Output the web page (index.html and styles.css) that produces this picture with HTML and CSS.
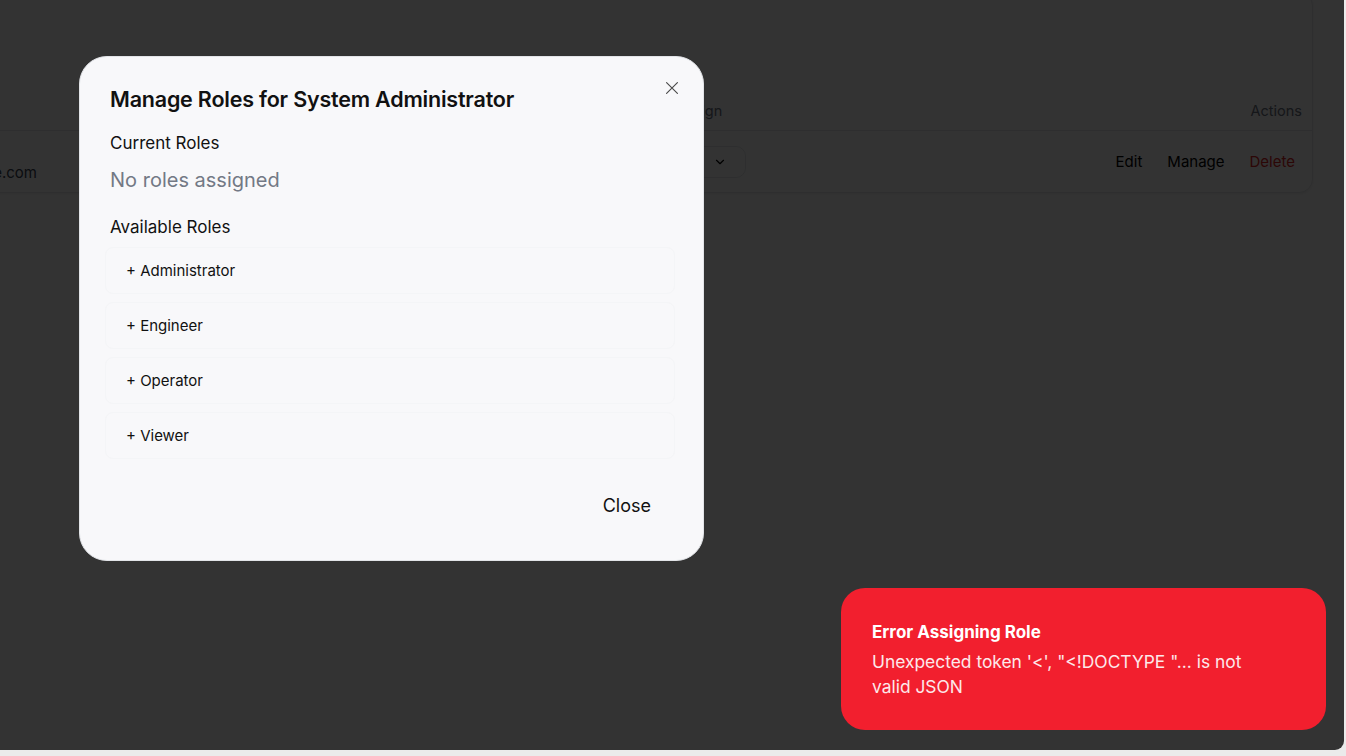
FILE: index.html
```html
<!DOCTYPE html>
<html lang="en">
<head>
<meta charset="utf-8">
<title>Manage Roles</title>
<link rel="stylesheet" href="styles.css">
</head>
<body>
<div class="screen">
  <div class="page">
    <div class="card">
      <div class="thead">
        <div class="th th-email">Email</div>
        <div class="th th-assign">Assign</div>
        <div class="th th-actions">Actions</div>
      </div>
      <div class="trow">
        <div class="td td-email">admin@example.com</div>
        <div class="td td-assign">
          <div class="select">
            <span>Select role</span>
            <svg width="14" height="14" viewBox="0 0 24 24" fill="none" stroke="#000" stroke-width="2" stroke-linecap="round" stroke-linejoin="round"><path d="M6 9l6 6 6-6"/></svg>
          </div>
        </div>
        <div class="td td-actions">
          <button class="link">Edit</button>
          <button class="link">Manage</button>
          <button class="link danger">Delete</button>
        </div>
      </div>
    </div>
  </div>

  <div class="overlay"></div>

  <div class="modal">
    <button class="modal-x" aria-label="Close">
      <svg width="20" height="20" viewBox="0 0 24 24" fill="none" stroke="#4b4b4b" stroke-width="1.4" stroke-linecap="round"><path d="M18.5 5.5L5.5 18.5M5.5 5.5l13 13"/></svg>
    </button>
    <h2 class="modal-title">Manage Roles for System Administrator</h2>
    <div class="section">
      <h3 class="section-title">Current Roles</h3>
      <p class="empty">No roles assigned</p>
    </div>
    <div class="section">
      <h3 class="section-title">Available Roles</h3>
      <div class="roles">
        <button class="role">+ Administrator</button>
        <button class="role">+ Engineer</button>
        <button class="role">+ Operator</button>
        <button class="role">+ Viewer</button>
      </div>
    </div>
    <div class="modal-footer">
      <button class="close-btn">Close</button>
    </div>
  </div>

  <div class="toast">
    <div class="toast-title">Error Assigning Role</div>
    <div class="toast-msg">Unexpected token '&lt;', "&lt;!DOCTYPE "... is not valid JSON</div>
  </div>
</div>
</body>
</html>
```

FILE: styles.css
```css
* { box-sizing: border-box; }

html, body {
  margin: 0;
  padding: 0;
}

body {
  background: #ebebeb;
  font-family: Inter, "Noto Sans", "Liberation Sans", sans-serif;
  width: 1346px;
  height: 756px;
  overflow: hidden;
}

.screen {
  position: relative;
  width: 1344px;
  height: 750px;
  background: #ffffff;
  overflow: hidden;
  border-bottom-right-radius: 9px;
}

.page {
  padding: 0 31px 0 0;
}

.card {
  margin-top: -8px;
  margin-left: -140px;
  background: #ffffff;
  border: 1px solid #e5e7eb;
  border-radius: 14px;
  box-shadow: 0 1px 3px rgba(0,0,0,0.08);
  padding-top: 98px;
}

.thead {
  display: flex;
  align-items: center;
  height: 40px;
  border-bottom: 1px solid #e5e7eb;
  color: #6b7280;
  font-size: 14.5px;
}

.th-email { width: 815px; padding-left: 16px; }
.th-assign { width: 200px; }
.th-actions { margin-left: auto; padding-right: 10px; }

.trow {
  display: flex;
  align-items: center;
  height: 61px;
  font-size: 15px;
}

.td-email {
  width: 176px;
  text-align: right;
  color: #374151;
  align-self: flex-end;
  padding-bottom: 10px;
}

.td-assign {
  margin-left: 564px;
  width: 145px;
}

.select {
  height: 32px;
  border: 1px solid #e5e7eb;
  border-radius: 10px;
  display: flex;
  align-items: center;
  justify-content: space-between;
  padding: 0 18px 0 12px;
  color: #374151;
  font-size: 14px;
}

.td-actions {
  margin-left: auto;
  display: flex;
  gap: 25px;
  padding-right: 17px;
}

.link {
  background: none;
  border: 0;
  padding: 0;
  font-family: inherit;
  font-size: 15px;
  color: #000;
}

.link.danger { color: #dc2626; }

.overlay {
  position: absolute;
  inset: 0;
  background: rgba(0,0,0,0.8);
}

.modal {
  position: absolute;
  left: 79px;
  top: 56px;
  width: 625px;
  height: 505px;
  background: #f8f8fa;
  border: 1px solid #e2e4e8;
  border-radius: 28px;
  padding: 27px 31px 0 30px;
  display: flex;
  flex-direction: column;
}

.modal-x {
  position: absolute;
  right: 21px;
  top: 21px;
  background: none;
  border: 0;
  padding: 0;
  width: 20px;
  height: 20px;
  display: flex;
}

.modal-title {
  margin: 0;
  font-size: 21.5px;
  line-height: 30px;
  font-weight: 600;
  color: #111;
  letter-spacing: -0.2px;
}

.section { margin-top: 17px; }
.section + .section { margin-top: 22px; }

.section-title {
  margin: 0;
  font-size: 17px;
  line-height: 24px;
  font-weight: 400;
  color: #111;
}

.empty {
  margin: 12px 0 0;
  font-size: 20px;
  line-height: 26px;
  color: #737985;
}

.roles {
  margin-top: 8px;
  display: flex;
  flex-direction: column;
  gap: 8px;
}

.role {
  height: 47px;
  background: #f8f8fa;
  border: 1px solid #f4f5f7;
  border-radius: 8px;
  text-align: left;
  padding: 0 20px;
  font-family: inherit;
  font-size: 15px;
  color: #111;
  margin-left: -5px;
  margin-right: -3px;
}

.modal-footer {
  margin-top: auto;
  margin-bottom: 35px;
  display: flex;
  justify-content: flex-end;
}

.close-btn {
  height: 40px;
  padding: 0 21px;
  background: #f8f8fa;
  border: 0;
  border-radius: 10px;
  font-family: inherit;
  font-size: 18px;
  color: #111;
}

.toast {
  position: absolute;
  left: 841px;
  top: 588px;
  width: 485px;
  height: 142px;
  background: #f21f2e;
  border-radius: 24px;
  padding: 32px 50px 0 31px;
  color: #fff;
}

.toast-title {
  font-size: 17px;
  font-weight: 700;
  line-height: 24px;
}

.toast-msg {
  margin-top: 5px;
  font-size: 17.4px;
  line-height: 25px;
  color: #fde8ea;
}
```
